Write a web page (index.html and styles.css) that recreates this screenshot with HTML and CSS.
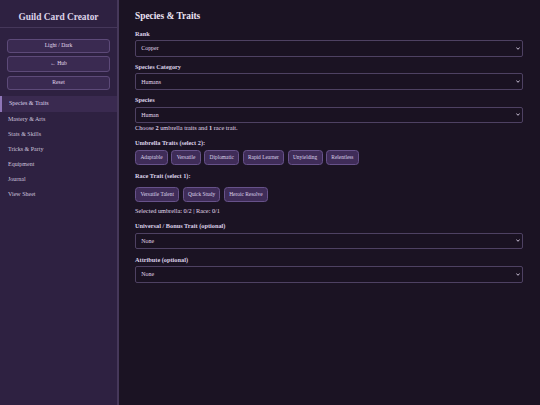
FILE: index.html
```html
<!DOCTYPE html>
<html lang="en">
<head>
<meta charset="utf-8">
<title>Guild Card Creator</title>
<link rel="stylesheet" href="styles.css">
</head>
<body>
<div class="app">
  <aside class="sidebar">
    <div class="brand">Guild Card Creator</div>
    <div class="actions">
      <button class="btn">Light / Dark</button>
      <button class="btn btn-hub">← Hub</button>
      <button class="btn">Reset</button>
    </div>
    <nav class="nav">
      <a class="nav-item active">Species &amp; Traits</a>
      <a class="nav-item">Mastery &amp; Arts</a>
      <a class="nav-item">Stats &amp; Skills</a>
      <a class="nav-item">Tricks &amp; Party</a>
      <a class="nav-item">Equipment</a>
      <a class="nav-item">Journal</a>
      <a class="nav-item">View Sheet</a>
    </nav>
  </aside>
  <main class="main">
    <h2 class="title">Species &amp; Traits</h2>

    <div class="field">
      <label class="label">Rank</label>
      <div class="select-wrap">
        <select class="select"><option>Copper</option></select>
        <svg class="chev" viewBox="0 0 4 3" width="4" height="3"><polyline points="0.4,0.5 2,2.3 3.6,0.5" fill="none" stroke="#d9cfe6" stroke-width="0.9"/></svg>
      </div>
    </div>

    <div class="field">
      <label class="label">Species Category</label>
      <div class="select-wrap">
        <select class="select"><option>Humans</option></select>
        <svg class="chev" viewBox="0 0 4 3" width="4" height="3"><polyline points="0.4,0.5 2,2.3 3.6,0.5" fill="none" stroke="#d9cfe6" stroke-width="0.9"/></svg>
      </div>
    </div>

    <div class="field field-hinted">
      <label class="label">Species</label>
      <div class="select-wrap">
        <select class="select"><option>Human</option></select>
        <svg class="chev" viewBox="0 0 4 3" width="4" height="3"><polyline points="0.4,0.5 2,2.3 3.6,0.5" fill="none" stroke="#d9cfe6" stroke-width="0.9"/></svg>
      </div>
      <p class="hint">Choose <b>2</b> umbrella traits and <b>1</b> race trait.</p>
    </div>

    <div class="group-label umbrella-label">Umbrella Traits (select 2):</div>
    <div class="chips umbrella-chips">
      <button class="chip">Adaptable</button>
      <button class="chip">Versatile</button>
      <button class="chip">Diplomatic</button>
      <button class="chip">Rapid Learner</button>
      <button class="chip">Unyielding</button>
      <button class="chip">Relentless</button>
    </div>

    <div class="group-label race-label">Race Trait (select 1):</div>
    <div class="chips race-chips">
      <button class="chip">Versatile Talent</button>
      <button class="chip">Quick Study</button>
      <button class="chip">Heroic Resolve</button>
    </div>

    <p class="status">Selected umbrella: 0/2 | Race: 0/1</p>

    <div class="field">
      <label class="label">Universal / Bonus Trait (optional)</label>
      <div class="select-wrap">
        <select class="select"><option>None</option></select>
        <svg class="chev" viewBox="0 0 4 3" width="4" height="3"><polyline points="0.4,0.5 2,2.3 3.6,0.5" fill="none" stroke="#d9cfe6" stroke-width="0.9"/></svg>
      </div>
    </div>

    <div class="field">
      <label class="label">Attribute (optional)</label>
      <div class="select-wrap">
        <select class="select"><option>None</option></select>
        <svg class="chev" viewBox="0 0 4 3" width="4" height="3"><polyline points="0.4,0.5 2,2.3 3.6,0.5" fill="none" stroke="#d9cfe6" stroke-width="0.9"/></svg>
      </div>
    </div>
  </main>
</div>
</body>
</html>
```

FILE: styles.css
```css
html, body {
  margin: 0;
  padding: 0;
  height: 100%;
}

body {
  font-family: "Liberation Serif", "Times New Roman", serif;
  background: #1b1323;
  color: #e4dbee;
}

.app {
  display: flex;
  height: 405px;
}

.sidebar {
  width: 119px;
  flex: none;
  box-sizing: border-box;
  background: #2e2141;
  border-right: 2px solid #46385a;
  display: flex;
  flex-direction: column;
}

.brand {
  height: 28px;
  box-sizing: border-box;
  padding-top: 11px;
  line-height: 12px;
  font-size: 9.4px;
  font-weight: bold;
  text-align: center;
  color: #ddd3e8;
  border-bottom: 1px solid #45375a;
}

.actions {
  display: flex;
  flex-direction: column;
  gap: 3.4px;
  padding: 10.6px 7px 6.6px;
}

.btn {
  height: 14.2px;
  padding: 0;
  margin: 0;
  box-sizing: border-box;
  font-family: inherit;
  font-size: 5.6px;
  line-height: 1;
  color: #e2d8ee;
  background: #3a2a51;
  border: 1px solid #5d4a79;
  border-radius: 3px;
}

.btn-hub {
  height: 16px;
}

.nav {
  display: flex;
  flex-direction: column;
}

.nav-item {
  height: 15.2px;
  line-height: 15.2px;
  padding-left: 8px;
  font-size: 6px;
  color: #cdc1dc;
}

.nav-item.active {
  background: #3a2a50;
  border-left: 2px solid #8f76b8;
  padding-left: 7px;
  color: #ddd3ea;
}

.main {
  flex: 1;
  padding: 9.7px 17px 0 16px;
  min-width: 0;
}

.title {
  margin: 0 0 8px;
  font-size: 9.4px;
  line-height: 12px;
  font-weight: bold;
  color: #ece4f4;
}

.field {
  display: flex;
  flex-direction: column;
  margin-bottom: 6.3px;
}

.label {
  display: block;
  font-size: 6.3px;
  line-height: 8px;
  font-weight: bold;
  color: #dcd1e8;
  margin-bottom: 2.3px;
}

.select-wrap {
  position: relative;
}

.select {
  display: block;
  width: 100%;
  height: 16.7px;
  box-sizing: border-box;
  appearance: none;
  -webkit-appearance: none;
  margin: 0;
  padding: 0 0 0 5.3px;
  font-family: inherit;
  font-size: 5.9px;
  color: #e2d8ec;
  background: #1a1222;
  border: 1px solid #4e4162;
  border-radius: 2px;
}

.chev {
  position: absolute;
  right: 2.6px;
  top: 6.8px;
}

.field-hinted {
  margin-bottom: 0;
}

.hint {
  margin: 0.6px 0 0;
  font-size: 6.3px;
  line-height: 8px;
  color: #e2d9ec;
}

.group-label {
  font-size: 6.3px;
  line-height: 8px;
  font-weight: bold;
  color: #dcd1e8;
}

.umbrella-label {
  margin-top: 7px;
  margin-bottom: 3.4px;
}

.race-label {
  margin-top: 7.3px;
  margin-bottom: 7px;
}

.chips {
  display: flex;
  flex-wrap: wrap;
  gap: 3.3px;
}

.chip {
  height: 14.4px;
  box-sizing: border-box;
  margin: 0;
  padding: 0 4.4px;
  font-family: inherit;
  font-size: 5.4px;
  line-height: 1;
  color: #ddd3ea;
  background: #3f2c58;
  border: 1px solid #67528a;
  border-radius: 3.5px;
}

.race-chips .chip {
  height: 14.7px;
}

.status {
  margin: 5px 0 7.7px;
  font-size: 6.3px;
  line-height: 8px;
  color: #e2d9ec;
}
```
